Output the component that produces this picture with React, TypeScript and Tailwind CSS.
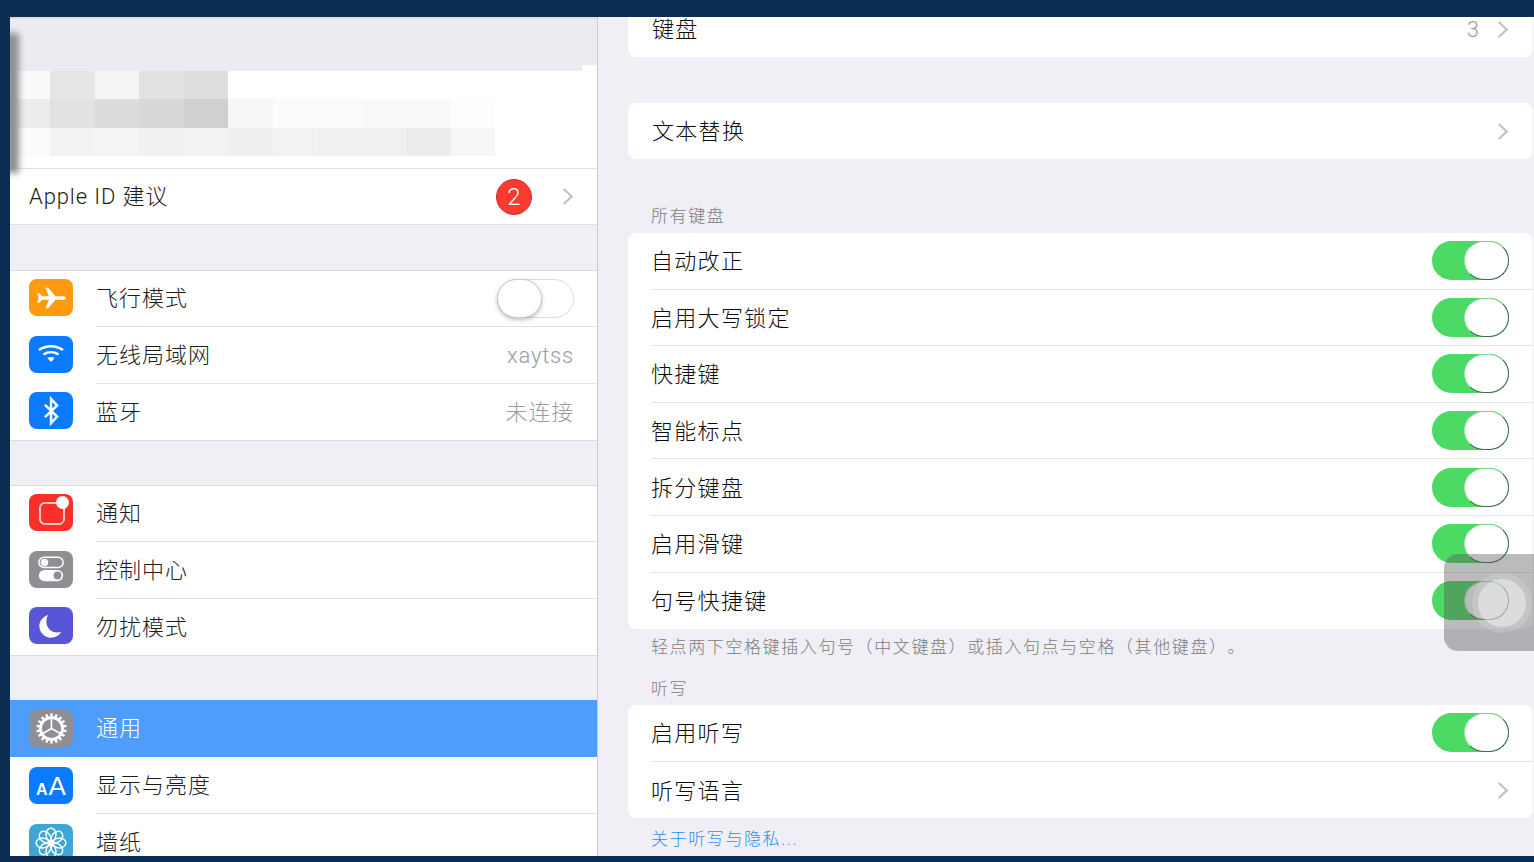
import React, { type ReactNode } from 'react';

const mosaic = [
  ['#fafafa', '#e5e5e5', '#f5f5f5', '#e2e2e2', '#dedede', '#ffffff', '#ffffff', '#ffffff', '#ffffff', '#ffffff', '#ffffff'],
  ['#ececec', '#e2e2e2', '#dcdcdc', '#d8d8d8', '#d0d0d0', '#f6f6f6', '#fbfbfb', '#fbfbfb', '#f9f9f9', '#f9f9f9', '#fdfdfd'],
  ['#fbfbfb', '#f3f3f3', '#f5f5f5', '#f1f1f1', '#f3f3f3', '#efefef', '#f2f2f2', '#f0f0f0', '#f0f0f0', '#ececec', '#f6f6f6'],
];

function Chevron() {
  return (
    <svg viewBox="0 0 12 20" className="h-[19px] w-[12px]" fill="none" stroke="#c0c0c4" strokeWidth="2.2">
      <path d="M1.5 2 L10 10 L1.5 18" />
    </svg>
  );
}

function Toggle({ on = true }: { on?: boolean }) {
  if (!on) {
    return (
      <div className="flex h-[39px] w-[77px] items-center rounded-full border border-[#dcdce0] bg-white">
        <div className="-ml-px h-[39px] w-[45px] rounded-full border border-[#c8c8c8] bg-white shadow-[0_2px_4px_rgba(0,0,0,0.25)]" />
      </div>
    );
  }
  return (
    <div className="flex h-[39px] w-[77px] items-center justify-end rounded-full bg-[#4cd964]">
      <div className="h-[39px] w-[45px] rounded-full border border-[#3f6b4a] border-l-[#9be8aa] border-t-[#7fd090] bg-white" />
    </div>
  );
}

function IconBox({ color, children, raised }: { color: string; children: ReactNode; raised?: boolean }) {
  return (
    <div
      className={`flex h-[37px] w-[44px] shrink-0 items-center justify-center rounded-[8px] ${raised ? 'mb-[3px]' : ''}`}
      style={{ backgroundColor: color }}
    >
      {children}
    </div>
  );
}

function SideRow({
  icon,
  label,
  value,
  children,
  last,
  selected,
  height = 'h-[57px]',
}: {
  icon: ReactNode;
  label: string;
  value?: string;
  children?: ReactNode;
  last?: boolean;
  selected?: boolean;
  height?: string;
}) {
  return (
    <div className={`flex ${height} items-center pl-[19px] ${selected ? 'bg-[#4e9dfb]' : ''}`}>
      {icon}
      <div
        className={`ml-[23px] flex h-full flex-1 items-center pr-[23px] ${
          last || selected ? '' : 'border-b border-[#e2e2e6]'
        }`}
      >
        <span className={`flex-1 text-[22px] tracking-[1px] ${selected ? 'text-white' : 'text-[#1c1c1c]'}`}>{label}</span>
        {value && <span className="text-[22px] tracking-[0.8px] text-[#9c9ca0]">{value}</span>}
        {children}
      </div>
    </div>
  );
}

function SideGroup({ children }: { children: ReactNode }) {
  return <div className="border-y border-[#dcdce0] bg-white">{children}</div>;
}

function Row({ label, children, last }: { label: string; children?: ReactNode; last?: boolean }) {
  return (
    <div className="flex h-[56.6px] items-center pl-[23px]">
      <div
        className={`flex h-full flex-1 items-center pr-[24px] ${last ? '' : 'border-b border-[#e4e4e8]'}`}
      >
        <span className="flex-1 translate-y-px text-[22px] tracking-[1.3px] text-[#0c0c0c]">{label}</span>
        {children}
      </div>
    </div>
  );
}

function Card({ children, className = '' }: { children: ReactNode; className?: string }) {
  return <div className={`mr-px rounded-[8px] bg-white ${className}`}>{children}</div>;
}

function Gear() {
  const teeth = Array.from({ length: 18 }, (_, i) => i * 20);
  return (
    <svg viewBox="0 0 36 36" className="h-[33px] w-[33px]" fill="none" stroke="white">
      {teeth.map((a) => (
        <line key={a} x1="18" y1="1.5" x2="18" y2="7" strokeWidth="2.6" transform={`rotate(${a} 18 18)`} />
      ))}
      <circle cx="18" cy="18" r="12" strokeWidth="3.2" />
      <path d="M18 18 L18 7 M18 18 L8.5 23.5 M18 18 L27.5 23.5" strokeWidth="1.8" />
    </svg>
  );
}

function Flower() {
  const petals = Array.from({ length: 8 }, (_, i) => i * 45);
  return (
    <svg viewBox="0 0 36 36" className="h-[32px] w-[32px]" fill="none" stroke="white" strokeWidth="1.6">
      {petals.map((a) => (
        <ellipse key={a} cx="18" cy="8.5" rx="5.6" ry="7.2" transform={`rotate(${a} 18 18)`} />
      ))}
      <circle cx="18" cy="18" r="2.4" fill="white" stroke="none" />
    </svg>
  );
}

export default function App() {
  return (
    <div className="relative flex h-[862px] w-[1534px] overflow-hidden bg-[#0c2d52] pb-[6px] pl-[10px] pt-[17px] font-['Roboto','Noto_Sans_CJK_SC',sans-serif] font-light [text-spacing-trim:space-all]">
      {/* master column */}
      <div className="relative flex w-[588px] flex-col overflow-hidden border-r border-[#c9c9ce] bg-[#efeff5]">
        <div className="h-[48px] shrink-0 border-t-2 border-[#dcdce0] bg-[#ecebf1]" />
        <div className="h-[103px] shrink-0 bg-white" />
        <div className="flex h-[57px] shrink-0 items-center border-y border-[#e0e0e4] bg-white pl-[19px] pr-[23px]">
          <span className="flex-1 text-[22px] tracking-[0.9px] text-[#1c1c1c]">Apple ID 建议</span>
          <div className="mr-[30px] flex h-[36px] w-[36px] items-center justify-center rounded-full border border-[#c9302c] bg-[#fb3a30] text-[24px] text-white">
            2
          </div>
          <Chevron />
        </div>

        {/* mosaic over the account row */}
        <div className="absolute left-0 top-[48px] h-[6px] w-[572px] bg-[#ecebf1]" />
        <div className="absolute left-0 top-[54px] flex flex-col">
          {mosaic.map((cells, r) => (
            <div key={r} className="flex h-[28.4px]">
              {cells.map((c, i) => (
                <div
                  key={i}
                  className={i === 0 ? 'w-[40px]' : 'w-[44.5px]'}
                  style={{ backgroundColor: c }}
                />
              ))}
            </div>
          ))}
        </div>
        <div className="absolute left-[-5px] top-[16px] h-[140px] w-[14px] bg-[#8f8f92] blur-[3px]" />

        <div className="mt-[45px] shrink-0">
          <SideGroup>
            <SideRow
              label="飞行模式"
              height="h-[56px]"
              icon={
                <IconBox raised color="#ff9a12">
                  <svg viewBox="0 0 24 24" preserveAspectRatio="none" className="h-[26px] w-[34px]" fill="white">
                    <path d="M22.5 12c0-1-1-1.7-2.2-1.7h-5.1L10 2.5H8l2.5 7.8H5.7L3.8 7.7H2.2L3.4 12l-1.2 4.3h1.6l1.9-2.6h4.8L8 21.5h2l5.2-7.8h5.1c1.2 0 2.2-.7 2.2-1.7z" />
                  </svg>
                </IconBox>
              }
            >
              <Toggle on={false} />
            </SideRow>
            <SideRow
              label="无线局域网"
              value="xaytss"
              icon={
                <IconBox raised color="#0a7aff">
                  <svg viewBox="0 0 28 24" className="h-[24px] w-[28px]" fill="none" stroke="white" strokeWidth="2.6">
                    <path d="M2 8C9 3 19 3 26 8" />
                    <path d="M6.5 12.5C11 9.5 17 9.5 21.5 12.5" />
                    <path d="M14 20l-3.6-4c2.2-1.4 5-1.4 7.2 0z" fill="white" stroke="none" />
                  </svg>
                </IconBox>
              }
            />
            <SideRow
              label="蓝牙"
              value="未连接"
              last
              height="h-[56px]"
              icon={
                <IconBox raised color="#0a7aff">
                  <svg viewBox="0 0 20 32" className="h-[30px] w-[19px]" fill="none" stroke="white" strokeWidth="2.6">
                    <path d="M3 9.5 L16 22 L9.5 29 V3 L16 10 L3 22.5" />
                  </svg>
                </IconBox>
              }
            />
          </SideGroup>
        </div>

        <div className="mt-[44px] shrink-0">
          <SideGroup>
            <SideRow
              label="通知"
              height="h-[56px]"
              icon={
                <IconBox raised color="#fb2f2a">
                  <div className="relative ml-[1px] mt-[1px] h-[23px] w-[26px] rounded-[6px] border-2 border-[#ffc9c4]">
                    <div className="absolute right-[-6px] top-[-8px] h-[13px] w-[13px] rounded-full bg-white" />
                  </div>
                </IconBox>
              }
            />
            <SideRow
              label="控制中心"
              icon={
                <IconBox raised color="#8e8e93">
                  <svg viewBox="0 0 30 30" className="h-[28px] w-[28px]">
                    <rect x="2" y="2.5" width="26" height="11" rx="5.5" fill="none" stroke="white" strokeWidth="1.6" />
                    <circle cx="8" cy="8" r="4" fill="white" />
                    <rect x="2" y="16" width="26" height="12" rx="6" fill="white" />
                    <circle cx="22" cy="22" r="4.2" fill="#8e8e93" />
                  </svg>
                </IconBox>
              }
            />
            <SideRow
              label="勿扰模式"
              last
              height="h-[56px]"
              icon={
                <IconBox raised color="#5856d6">
                  <svg viewBox="0 0 24 24" className="h-[28px] w-[28px]" fill="white">
                    <path d="M9.5 2.5C5 4 2 7.6 2 12c0 5.5 4.5 10 10 10 3.8 0 7-2 8.8-5-1 .4-2.2.6-3.4.6-5.2 0-9.4-4-9.4-9.2 0-2.3.6-4.4 1.5-5.9z" />
                  </svg>
                </IconBox>
              }
            />
          </SideGroup>
        </div>

        <div className="mt-[44px] shrink-0 bg-white">
          <SideRow label="通用" selected icon={<IconBox color="#8e8e93"><Gear /></IconBox>} />
          <SideRow
            label="显示与亮度"
            icon={
              <IconBox color="#0a7aff">
                <span className="font-['Liberation_Sans',sans-serif] text-[26px] font-normal leading-none text-white">
                  <span className="mr-[1px] text-[16px] font-bold">A</span>A
                </span>
              </IconBox>
            }
          />
          <SideRow label="墙纸" last icon={<IconBox color="#3ea6d6"><Flower /></IconBox>} />
        </div>
      </div>

      {/* detail column */}
      <div className="flex flex-1 flex-col bg-[#efeff5] pl-[30px]">
        <Card className="h-[40px] shrink-0 overflow-hidden rounded-t-none">
          <div className="-mt-[16px] flex h-[56px] items-center pl-[24px] pr-[24px]">
            <span className="flex-1 text-[22px] tracking-[1.3px] text-[#0c0c0c]">键盘</span>
            <span className="mr-[18px] text-[22px] text-[#9a9a9e]">3</span>
            <Chevron />
          </div>
        </Card>

        <Card className="mt-[46px] flex h-[56px] shrink-0 items-center pl-[24px] pr-[24px]">
          <span className="flex-1 text-[22px] tracking-[1.3px] text-[#0c0c0c]">文本替换</span>
          <Chevron />
        </Card>

        <div className="mt-[45px] h-[29px] shrink-0 pl-[23px] text-[17px] leading-[25px] tracking-[1.6px] text-[#7c7c80]">所有键盘</div>
        <Card className="shrink-0">
          <Row label="自动改正"><Toggle /></Row>
          <Row label="启用大写锁定"><Toggle /></Row>
          <Row label="快捷键"><Toggle /></Row>
          <Row label="智能标点"><Toggle /></Row>
          <Row label="拆分键盘"><Toggle /></Row>
          <Row label="启用滑键"><Toggle /></Row>
          <Row label="句号快捷键" last><Toggle /></Row>
        </Card>

        <div className="h-[39px] shrink-0 whitespace-nowrap pl-[23px] pt-[6px] text-[17px] leading-[25px] tracking-[1.6px] text-[#7c7c80]">
          轻点两下空格键插入句号（中文键盘）或插入句点与空格（其他键盘）。
        </div>
        <div className="h-[37px] shrink-0 pl-[23px] pt-[9px] text-[17px] leading-[25px] tracking-[1.6px] text-[#7c7c80]">听写</div>

        <Card className="shrink-0">
          <Row label="启用听写"><Toggle /></Row>
          <Row label="听写语言" last><Chevron /></Row>
        </Card>
        <div className="pl-[23px] pt-[9px] text-[17px] leading-[25px] tracking-[1.6px] text-[#2f8cf0]">关于听写与隐私...</div>
      </div>

      {/* assistive touch */}
      <div className="absolute left-[1444px] top-[554px] flex h-[97px] w-[90px] items-center justify-center rounded-l-[14px] bg-[#555]/40">
        <div className="ml-[26px] flex h-[60px] w-[60px] items-center justify-center rounded-full bg-white/15">
          <div className="h-[48px] w-[48px] rounded-full bg-white/40" />
        </div>
      </div>
    </div>
  );
}
